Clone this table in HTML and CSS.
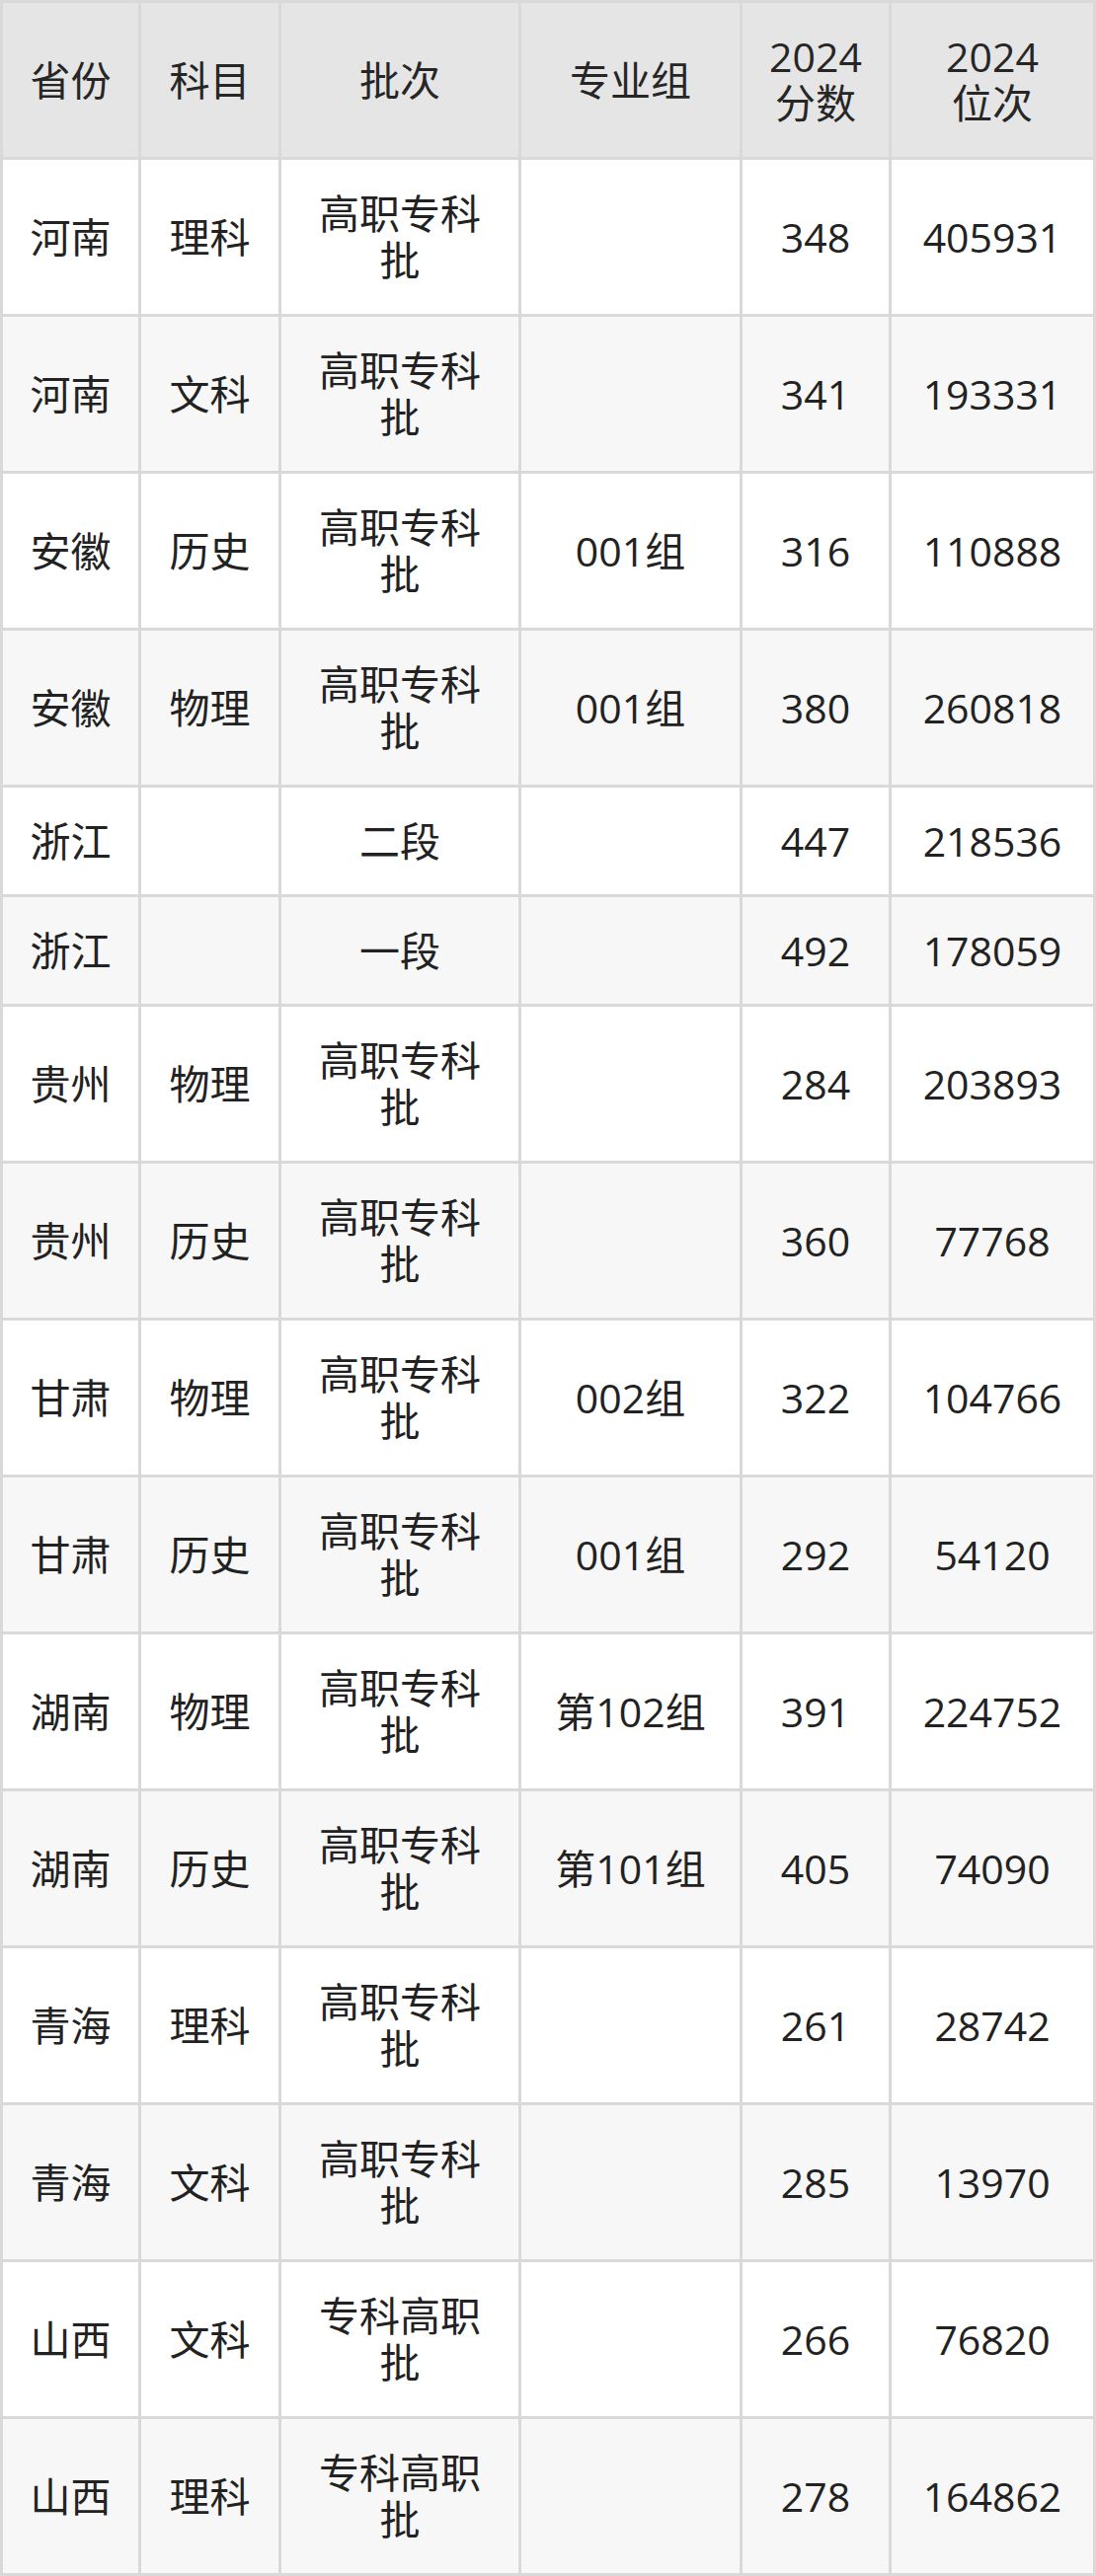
FILE: index.html
```html
<!DOCTYPE html>
<html lang="zh-CN">
<head>
<meta charset="utf-8">
<title>2024 分数 位次</title>
<link rel="stylesheet" href="styles.css">
</head>
<body>
<table class="score-table">
  <colgroup>
    <col class="c-prov">
    <col class="c-subj">
    <col class="c-batch">
    <col class="c-group">
    <col class="c-score">
    <col class="c-rank">
  </colgroup>
  <thead>
    <tr class="head-row">
      <th>省份</th><th>科目</th><th>批次</th><th>专业组</th><th>2024<br>分数</th><th>2024<br>位次</th>
    </tr>
  </thead>
  <tbody>
    <tr class="tall"><td>河南</td><td>理科</td><td>高职专科批</td><td></td><td>348</td><td>405931</td></tr>
    <tr class="tall"><td>河南</td><td>文科</td><td>高职专科批</td><td></td><td>341</td><td>193331</td></tr>
    <tr class="tall"><td>安徽</td><td>历史</td><td>高职专科批</td><td>001组</td><td>316</td><td>110888</td></tr>
    <tr class="tall"><td>安徽</td><td>物理</td><td>高职专科批</td><td>001组</td><td>380</td><td>260818</td></tr>
    <tr class="short"><td>浙江</td><td></td><td>二段</td><td></td><td>447</td><td>218536</td></tr>
    <tr class="short"><td>浙江</td><td></td><td>一段</td><td></td><td>492</td><td>178059</td></tr>
    <tr class="tall"><td>贵州</td><td>物理</td><td>高职专科批</td><td></td><td>284</td><td>203893</td></tr>
    <tr class="tall"><td>贵州</td><td>历史</td><td>高职专科批</td><td></td><td>360</td><td>77768</td></tr>
    <tr class="tall"><td>甘肃</td><td>物理</td><td>高职专科批</td><td>002组</td><td>322</td><td>104766</td></tr>
    <tr class="tall"><td>甘肃</td><td>历史</td><td>高职专科批</td><td>001组</td><td>292</td><td>54120</td></tr>
    <tr class="tall"><td>湖南</td><td>物理</td><td>高职专科批</td><td>第102组</td><td>391</td><td>224752</td></tr>
    <tr class="tall"><td>湖南</td><td>历史</td><td>高职专科批</td><td>第101组</td><td>405</td><td>74090</td></tr>
    <tr class="tall"><td>青海</td><td>理科</td><td>高职专科批</td><td></td><td>261</td><td>28742</td></tr>
    <tr class="tall"><td>青海</td><td>文科</td><td>高职专科批</td><td></td><td>285</td><td>13970</td></tr>
    <tr class="tall"><td>山西</td><td>文科</td><td>专科高职批</td><td></td><td>266</td><td>76820</td></tr>
    <tr class="tall"><td>山西</td><td>理科</td><td>专科高职批</td><td></td><td>278</td><td>164862</td></tr>
  </tbody>
</table>
</body>
</html>
```

FILE: styles.css
```css
html, body {
  margin: 0;
  padding: 0;
  background: #ffffff;
}

.score-table {
  width: 1110px;
  table-layout: fixed;
  border-collapse: separate;
  border-spacing: 3px;
  background: #d9d9d9;
  font-family: "Open Sans", "Noto Sans CJK SC", sans-serif;
  font-size: 41px;
  line-height: 47px;
  color: #222222;
}

.c-prov { width: 137px; }
.c-subj { width: 139px; }
.c-batch { width: 240px; }
.c-group { width: 221px; }
.c-score { width: 148px; }
.c-rank { width: 204px; }

.score-table th,
.score-table td {
  padding: 0 24px;
  text-align: center;
  vertical-align: middle;
  font-weight: normal;
  background: #ffffff;
}

.score-table th {
  background: #e5e5e5;
  color: #262626;
}

.head-row { height: 156px; }
.tall { height: 156px; }
.short { height: 108px; }

.score-table tbody tr:nth-child(even) td {
  background: #f7f7f7;
}
```
